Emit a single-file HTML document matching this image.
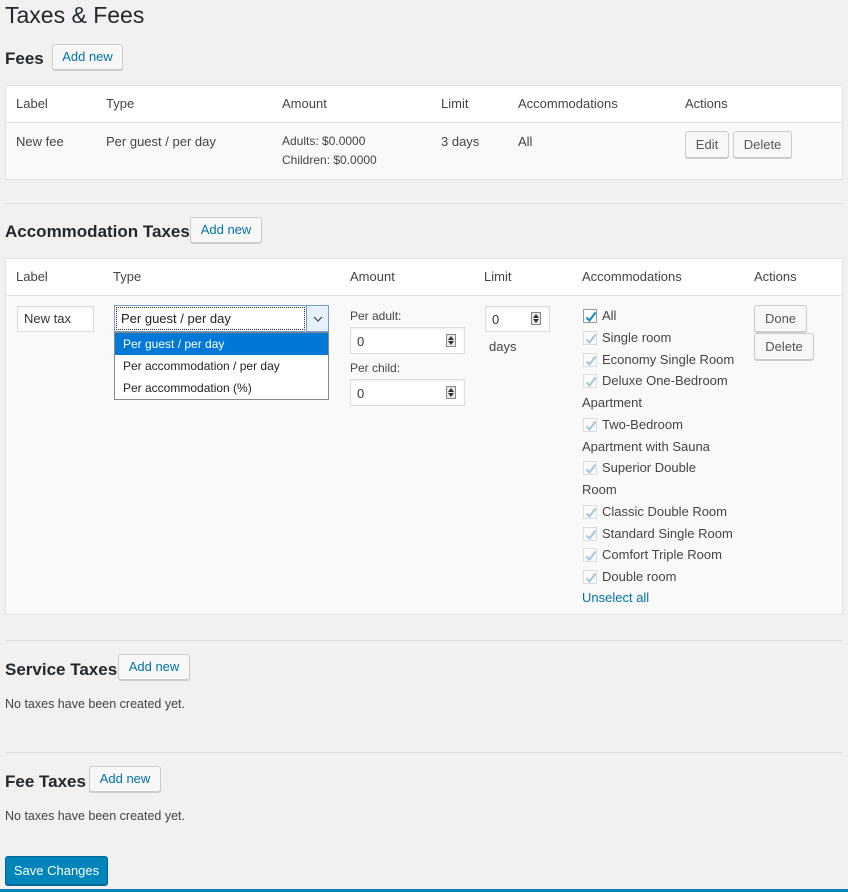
<!DOCTYPE html>
<html><head><style>
*{box-sizing:border-box;margin:0;padding:0}
body{width:848px;height:892px;background:#f1f1f1;font-family:"Liberation Sans",sans-serif;font-size:13px;color:#444;position:relative;overflow:hidden}
.a{position:absolute;white-space:nowrap}
.h1{font-size:23px;color:#23282d}
.h2{font-size:17px;font-weight:bold;color:#23282d}
.btn{position:absolute;background:#f7f7f7;border:1px solid #ccc;border-radius:3px;box-shadow:0 1px 0 #ccc;color:#555;font-size:13px;text-align:center}
.add{color:#0073aa;line-height:23px}
.tbl{position:absolute;left:5px;width:838px;border:1px solid #e1e1e1;background:#f9f9f9}
.th{position:absolute;left:0;right:0;top:0;height:37px;background:#fff;border-bottom:1px solid #e1e1e1}
.hr{position:absolute;left:5px;width:838px;height:1px;background:#ddd}
.inp{position:absolute;background:#fff;border:1px solid #ddd;box-shadow:inset 0 1px 2px rgba(0,0,0,.07);color:#333;padding-left:6px}
.spin{position:absolute;right:8px;top:6px;width:10px;height:13px;border:1px solid #888;background:#e8e8e8}
.spin:before{content:"";position:absolute;left:1px;top:1px;border:3px solid transparent;border-bottom:4px solid #333;border-top:0}
.spin:after{content:"";position:absolute;left:1px;bottom:1px;border:3px solid transparent;border-top:4px solid #333;border-bottom:0}
.cb{position:absolute;left:583px;width:14px;height:14px;border:1px solid #ddd;background:#fafafa}
.cb svg{position:absolute;left:1px;top:1px}
</style></head><body>
<div class="a h1" style="left:5px;top:2px">Taxes &amp; Fees</div>

<div class="a h2" style="left:5px;top:49px">Fees</div>
<div class="btn add" style="left:52px;top:44px;width:71px;height:26px">Add new</div>
<div class="tbl" style="top:85px;height:95px">
<div class="th"></div>
</div>
<div class="a" style="left:16px;top:96px">Label</div>
<div class="a" style="left:106px;top:96px">Type</div>
<div class="a" style="left:282px;top:96px">Amount</div>
<div class="a" style="left:441px;top:96px">Limit</div>
<div class="a" style="left:518px;top:96px">Accommodations</div>
<div class="a" style="left:685px;top:96px">Actions</div>
<div class="a" style="left:16px;top:134px">New fee</div>
<div class="a" style="left:106px;top:134px">Per guest / per day</div>
<div class="a" style="left:282px;top:134px;font-size:12px">Adults: $0.0000</div>
<div class="a" style="left:282px;top:153px;font-size:12px">Children: $0.0000</div>
<div class="a" style="left:441px;top:134px">3 days</div>
<div class="a" style="left:518px;top:134px">All</div>
<div class="btn" style="left:685px;top:131px;width:44px;height:27px;line-height:25px">Edit</div>
<div class="btn" style="left:733px;top:131px;width:59px;height:27px;line-height:25px">Delete</div>

<div class="hr" style="top:203px"></div>
<div class="a h2" style="left:5px;top:222px">Accommodation Taxes</div>
<div class="btn add" style="left:190px;top:217px;width:72px;height:26px">Add new</div>
<div class="tbl" style="top:258px;height:357px"><div class="th"></div></div>
<div class="a" style="left:16px;top:269px">Label</div>
<div class="a" style="left:113px;top:269px">Type</div>
<div class="a" style="left:350px;top:269px">Amount</div>
<div class="a" style="left:484px;top:269px">Limit</div>
<div class="a" style="left:582px;top:269px">Accommodations</div>
<div class="a" style="left:754px;top:269px">Actions</div>

<div class="inp" style="left:17px;top:306px;width:77px;height:26px;line-height:24px">New tax</div>
<div class="a" style="left:114px;top:305px;width:215px;height:27px;background:#fff;border:1px solid #7a9cc7"></div>
<div class="a" style="left:116px;top:307px;width:189px;height:23px;border:1px dotted #333;line-height:21px;padding-left:4px;color:#222">Per guest / per day</div>
<div class="a" style="left:306px;top:306px;width:22px;height:25px;background:#e5f1fb;border-left:1px solid #7a9cc7"><svg width="22" height="25"><path d="M7 11l4 4 4-4" fill="none" stroke="#333"/></svg></div>
<div class="a" style="left:114px;top:332px;width:215px;height:68px;background:#fff;border:1px solid #888;font-size:12px;color:#222">
<div style="height:22px;background:#0078d7;color:#fff;padding-left:8px;line-height:22px">Per guest / per day</div>
<div style="height:22px;padding-left:8px;line-height:22px">Per accommodation / per day</div>
<div style="height:22px;padding-left:8px;line-height:22px">Per accommodation (%)</div>
</div>

<div class="a" style="left:350px;top:309px;font-size:12px">Per adult:</div>
<div class="inp" style="left:350px;top:327px;width:115px;height:27px;line-height:27px">0<div class="spin"></div></div>
<div class="a" style="left:350px;top:361px;font-size:12px">Per child:</div>
<div class="inp" style="left:350px;top:379px;width:115px;height:27px;line-height:27px">0<div class="spin"></div></div>
<div class="inp" style="left:485px;top:306px;width:65px;height:26px;line-height:25px">0<div class="spin" style="top:5px"></div></div>
<div class="a" style="left:489px;top:339px">days</div>

<div class="cb" style="top:309px;border-color:#999;background:#fff"><svg width="12" height="12"><path d="M1.5 6.5l3 3 6-8" fill="none" stroke="#1e8cbe" stroke-width="2.2"/></svg></div>
<div class="a" style="left:602px;top:308px">All</div>
<div id="cbs"></div>
<div class="a" style="left:582px;top:590px;color:#0073aa">Unselect all</div>
<div class="btn" style="left:754px;top:305px;width:53px;height:27px;line-height:25px">Done</div>
<div class="btn" style="left:754px;top:333px;width:60px;height:27px;line-height:25px">Delete</div>

<div class="hr" style="top:640px"></div>
<div class="a h2" style="left:5px;top:660px">Service Taxes</div>
<div class="btn add" style="left:118px;top:654px;width:72px;height:26px">Add new</div>
<div class="a" style="left:5px;top:697px;font-size:12.5px">No taxes have been created yet.</div>
<div class="hr" style="top:752px"></div>
<div class="a h2" style="left:5px;top:772px">Fee Taxes</div>
<div class="btn add" style="left:89px;top:766px;width:72px;height:26px">Add new</div>
<div class="a" style="left:5px;top:809px;font-size:12.5px">No taxes have been created yet.</div>
<div class="a" style="left:5px;top:856px;width:103px;height:29px;background:#0085ba;border:1px solid #006799;border-radius:3px;color:#fff;text-align:center;line-height:27px;box-shadow:0 1px 0 #006799">Save Changes</div>
<div class="a" style="left:0;top:889px;width:848px;height:3px;background:#0085ba"></div>

<script>
var rows=[[338,"Single room"],[360,"Economy Single Room"],[381,"Deluxe One-Bedroom"],[403,"Apartment",1],[425,"Two-Bedroom"],[447,"Apartment with Sauna",1],[468,"Superior Double"],[490,"Room",1],[512,"Classic Double Room"],[534,"Standard Single Room"],[555,"Comfort Triple Room"],[577,"Double room"]];
var h="";rows.forEach(function(r){var t=r[0]-8;if(!r[2])h+='<div class="cb" style="top:'+(t+1)+'px"><svg width="12" height="12"><path d="M1.5 6.5l3 3 6-8" fill="none" stroke="#a0c8dd" stroke-width="2"/></svg></div><div class="a" style="left:602px;top:'+t+'px">'+r[1]+'</div>';else h+='<div class="a" style="left:582px;top:'+t+'px">'+r[1]+'</div>';});
document.getElementById("cbs").innerHTML=h;
</script>
</body></html>
